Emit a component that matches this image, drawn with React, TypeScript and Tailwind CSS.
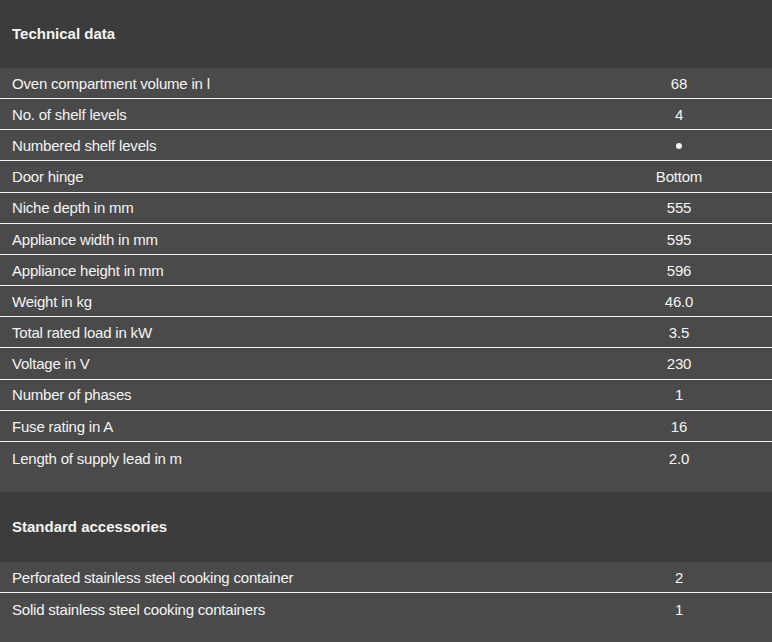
const technical: [string, string][] = [
  ["Oven compartment volume in l", "68"],
  ["No. of shelf levels", "4"],
  ["Numbered shelf levels", "•"],
  ["Door hinge", "Bottom"],
  ["Niche depth in mm", "555"],
  ["Appliance width in mm", "595"],
  ["Appliance height in mm", "596"],
  ["Weight in kg", "46.0"],
  ["Total rated load in kW", "3.5"],
  ["Voltage in V", "230"],
  ["Number of phases", "1"],
  ["Fuse rating in A", "16"],
  ["Length of supply lead in m", "2.0"],
];

const accessories: [string, string][] = [
  ["Perforated stainless steel cooking container", "2"],
  ["Solid stainless steel cooking containers", "1"],
];

function Section({ title, rows, head }: { title: string; rows: [string, string][]; head: string }) {
  return (
    <div>
      <div className={`${head} bg-[#3c3c3c] flex items-center px-3`}>
        <h2 className="text-[15px] font-bold tracking-[0px] text-[#f4f4f4]">{title}</h2>
      </div>
      <div className="bg-[#4a4a4a]">
        {rows.map(([label, value], i) => {
          const last = i === rows.length - 1;
          return (
            <div
              key={label}
              className={
                last
                  ? "flex h-[50px] pt-[6px] items-start"
                  : "flex h-[31.17px] pt-[2px] items-center border-b border-[#f2f2f2]"
              }
            >
              <div className="flex-1 pl-3 text-[15px] tracking-[-0.2px] text-[#f4f4f4]">{label}</div>
              <div className="w-[186px] flex justify-center text-[15px] tracking-[-0.2px] text-[#f4f4f4]">
                {value === "•" ? (
                  <span className="block w-[6px] h-[6px] rounded-full bg-[#f4f4f4] my-[6px]" />
                ) : (
                  value
                )}
              </div>
            </div>
          );
        })}
      </div>
    </div>
  );
}

export default function App() {
  return (
    <div className="w-[772px] h-[642px] overflow-hidden bg-[#4a4a4a] font-['Liberation_Sans',Arial,sans-serif]">
      <Section title="Technical data" rows={technical} head="h-[68px]" />
      <Section title="Standard accessories" rows={accessories} head="h-[70px]" />
    </div>
  );
}
